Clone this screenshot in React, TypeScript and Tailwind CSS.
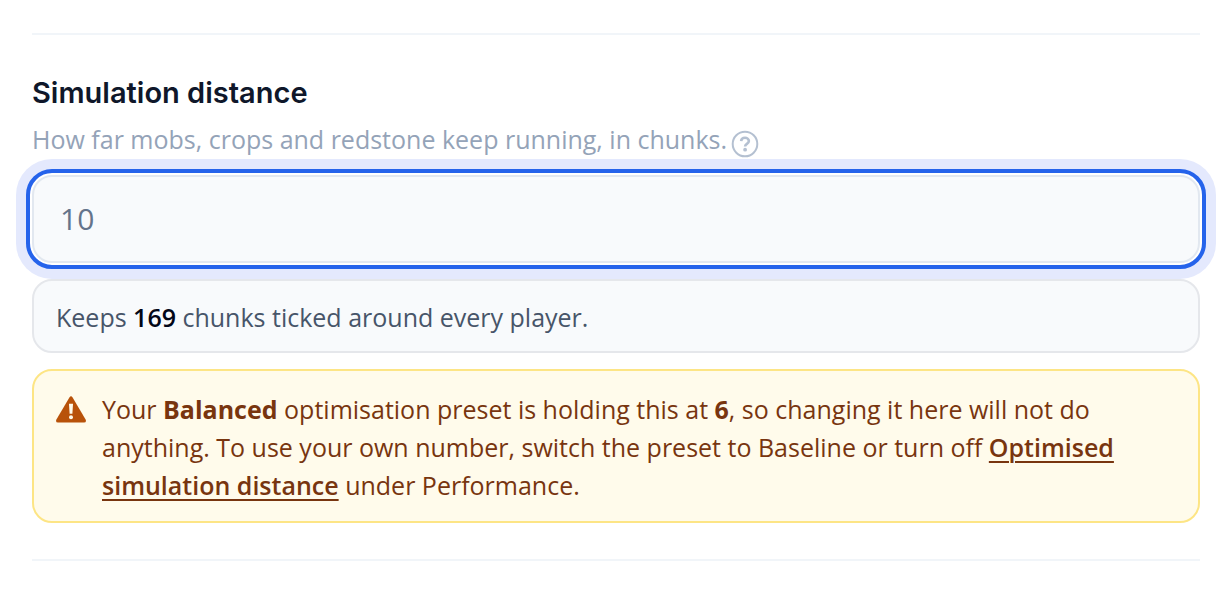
import React, { useState } from "react";

function HelpIcon() {
  return (
    <svg viewBox="0 0 28 28" fill="none" className="size-7" aria-hidden="true">
      <circle cx="14" cy="14" r="12.3" stroke="currentColor" strokeWidth="2" />
      <path d="M10.1 11.2C10.3 9 12 7.8 14 7.8s3.9 1.2 3.9 3.3c0 2.9-3.8 2.7-3.8 5.3" stroke="currentColor" strokeWidth="2.6" />
      <circle cx="14.1" cy="19.7" r="1.9" fill="currentColor" />
    </svg>
  );
}

function WarningIcon() {
  return (
    <svg viewBox="0 0 30 28" className="mt-1.5 h-7 w-[30px] shrink-0 text-[#b8520a]" aria-hidden="true">
      <path
        d="M13.4 1.4Q15-.9 16.6 1.4L29.6 23.4Q30.8 26.5 28 26.5H2Q-.8 26.5 .4 23.4Z"
        fill="currentColor"
      />
      <path d="M13 7.8h4l-.6 10h-2.8z" fill="#fffbeb" />
      <circle cx="15" cy="21.2" r="2" fill="#fffbeb" />
    </svg>
  );
}

export default function App() {
  const [distance, setDistance] = useState("10");

  return (
    <main className="px-8 pt-[33px] font-['Open_Sans','Noto_Sans',sans-serif] text-[25px] leading-[38px]">
      <section className="border-y-2 border-slate-100 pt-[38px] pb-9">
        <label htmlFor="simulation-distance" className="block font-['Inter',sans-serif] text-[29px] leading-[40px] font-semibold text-[#0f172a]">
          Simulation distance
        </label>
        <div className="flex h-[62px] items-start gap-1 pt-[7px] text-[#94a3b8]">
          <p id="simulation-help">How far mobs, crops and redstone keep running, in chunks.</p>
          <button type="button" aria-label="About simulation distance" className="mt-2.5 text-[#b4c0d1]">
            <HelpIcon />
          </button>
        </div>
        <input
          id="simulation-distance"
          type="text"
          inputMode="numeric"
          aria-describedby="simulation-help"
          value={distance}
          onChange={(e) => setDistance(e.target.value)}
          className="block h-[88px] w-full rounded-[20px] border-2 border-[#e2e8f0] bg-[#f8fafc] px-[26px] pb-0.5 text-[30px] text-[#64748b] shadow-[0_0_0_2px_#fff,0_0_0_16px_#e4e9fd] outline-4 outline-offset-2 outline-[#2563eb]"
        />
        <p className="mt-4 rounded-[20px] border-2 border-[#e5e7eb] bg-[#f8fafc] px-[22px] pt-[17px] pb-[15px] text-[#475569]">
          Keeps <strong className="font-semibold text-[#020617]">169</strong> chunks ticked around every player.
        </p>
        <div className="mt-4 flex gap-4 rounded-[20px] border-2 border-[#fde585] bg-[#fffbeb] px-[22px] pt-[19px] pb-[17px] text-[#78350f]">
          <WarningIcon />
          <p>
            Your <strong className="font-bold">Balanced</strong> optimisation preset is holding this at{" "}
            <strong className="font-bold">6</strong>, so changing it here will not do anything. To use your own number,
            switch the preset to Baseline or turn off{" "}
            <a href="#performance" className="font-semibold underline decoration-2 underline-offset-4">
              Optimised simulation distance
            </a>{" "}
            under Performance.
          </p>
        </div>
      </section>
    </main>
  );
}
